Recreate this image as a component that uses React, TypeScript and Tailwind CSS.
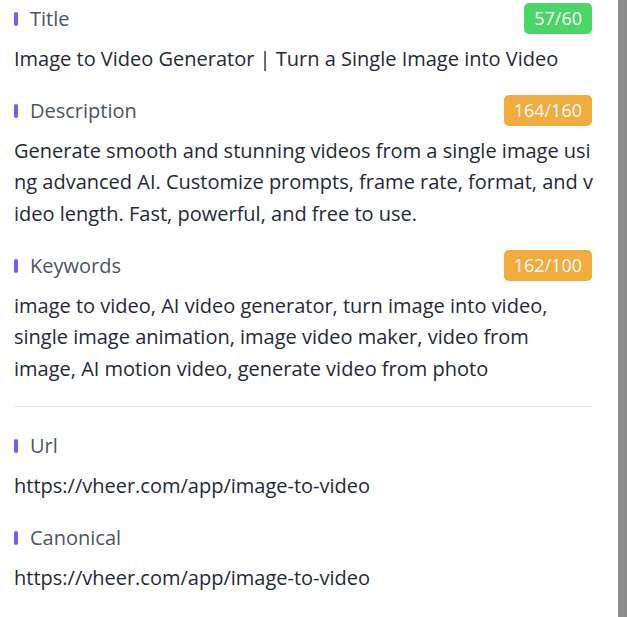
type Field = {
  label: string;
  value: string;
  count?: string;
  tone?: 'ok' | 'warn';
  breakAll?: boolean;
};

const top: Field[] = [
  {
    label: 'Title',
    value: 'Image to Video Generator | Turn a Single Image into Video',
    count: '57/60',
    tone: 'ok',
  },
  {
    label: 'Description',
    value:
      'Generate smooth and stunning videos from a single image using advanced AI. Customize prompts, frame rate, format, and video length. Fast, powerful, and free to use.',
    count: '164/160',
    tone: 'warn',
    breakAll: true,
  },
  {
    label: 'Keywords',
    value:
      'image to video, AI video generator, turn image into video, single image animation, image video maker, video from image, AI motion video, generate video from photo',
    count: '162/100',
    tone: 'warn',
  },
];

const bottom: Field[] = [
  { label: 'Url', value: 'https://vheer.com/app/image-to-video' },
  { label: 'Canonical', value: 'https://vheer.com/app/image-to-video' },
];

function MetaField({ field }: { field: Field }) {
  return (
    <div className="flex flex-col">
      <div className="flex h-[31px] items-center justify-between">
        <div className="flex items-center gap-3">
          <span className="h-[14px] w-[4px] rounded-full bg-[#6a5fff]" />
          <span className="text-[20px] leading-[31px] text-[#4b5563]">{field.label}</span>
        </div>
        {field.count && (
          <span
            className={`flex h-[31px] items-center rounded-[5px] px-[10px] text-[18px] text-white ${
              field.tone === 'ok' ? 'bg-[#4ad568]' : 'bg-[#f2ab3d]'
            }`}
          >
            {field.count}
          </span>
        )}
      </div>
      <p
        className={`mt-[8.5px] text-[20px] leading-[31.5px] text-[#1f2937] ${
          field.breakAll ? '-mr-[4px] break-all' : ''
        }`}
      >
        {field.value}
      </p>
    </div>
  );
}

export default function App() {
  return (
    <div className="flex h-[617px] w-[627px] bg-white" style={{ fontFamily: "'Open Sans', sans-serif" }}>
      <div className="flex-1 overflow-hidden pl-[14px] pr-[26px] pt-[3px]">
        <div className="flex flex-col gap-[21px]">
          {top.map((f) => (
            <MetaField key={f.label} field={f} />
          ))}
        </div>
        <div className="mb-[23px] mt-[22px] h-px bg-[#e5e7eb]" />
        <div className="flex flex-col gap-[21px]">
          {bottom.map((f) => (
            <MetaField key={f.label} field={f} />
          ))}
        </div>
      </div>
      {/* scrollbar */}
      <div className="w-[9px] bg-[#8c8c8c]" />
    </div>
  );
}
